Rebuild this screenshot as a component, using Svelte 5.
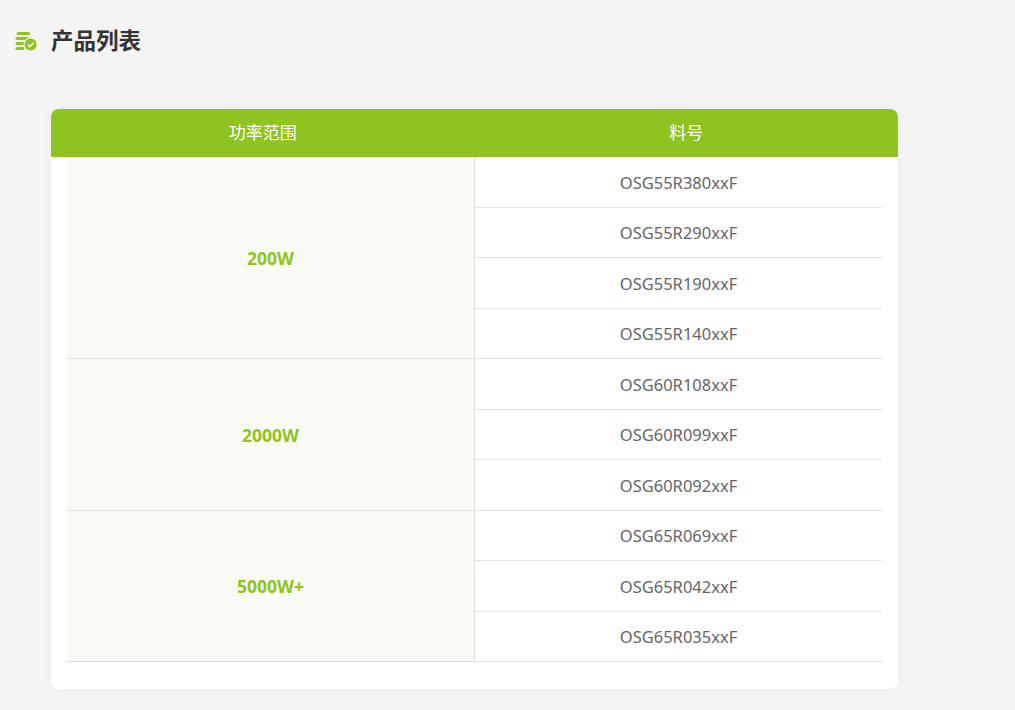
<script>
	const groups = [
		{ power: '200W', parts: ['OSG55R380xxF', 'OSG55R290xxF', 'OSG55R190xxF', 'OSG55R140xxF'] },
		{ power: '2000W', parts: ['OSG60R108xxF', 'OSG60R099xxF', 'OSG60R092xxF'] },
		{ power: '5000W+', parts: ['OSG65R069xxF', 'OSG65R042xxF', 'OSG65R035xxF'] }
	];
</script>

<div class="page">
	<div class="title">
		<svg class="icon" width="22" height="20" viewBox="0 0 22 20">
			<rect x="1.5" y="1" width="13.5" height="3" rx="1.5" fill="#8fc31f" />
			<rect x="0.5" y="6" width="14" height="3" rx="1.5" fill="#8fc31f" />
			<rect x="0.5" y="11" width="9" height="3" rx="1.5" fill="#8fc31f" />
			<rect x="0.5" y="16" width="9" height="3" rx="1.5" fill="#8fc31f" />
			<circle cx="15.6" cy="13.4" r="7" fill="#f4f4f4" />
			<circle cx="15.6" cy="13.4" r="6" fill="#8fc31f" />
			<path d="M12.8 13.4l2.1 2.2 3.7-3.9" fill="none" stroke="#f4f4f4" stroke-width="1.6" />
		</svg>
		<h1>产品列表</h1>
	</div>

	<div class="card">
		<div class="head">
			<div>功率范围</div>
			<div>料号</div>
		</div>
		<div class="body">
			<table>
				<tbody>
					{#each groups as group}
						{#each group.parts as part, i}
							<tr>
								{#if i === 0}
									<td class="power" rowspan={group.parts.length}>{group.power}</td>
								{/if}
								<td class="part">{part}</td>
							</tr>
						{/each}
					{/each}
				</tbody>
			</table>
		</div>
	</div>
</div>

<style>
	:global(body) {
		background: #f4f4f4;
	}

	.page {
		font-family: "Noto Sans", "Open Sans", "Noto Sans CJK SC", sans-serif;
		height: 710px;
		overflow: hidden;
		padding: 21px 0 0 15px;
		box-sizing: border-box;
	}

	.title {
		display: flex;
		align-items: center;
		height: 36px;
	}

	.icon {
		display: block;
		margin-right: 14px;
		margin-top: 4px;
	}

	h1 {
		margin: 0;
		font-family: "Noto Sans CJK SC", sans-serif;
		font-size: 22.5px;
		font-weight: 700;
		color: #333;
	}

	.card {
		width: 847px;
		margin: 52px 0 0 36px;
		background: #fff;
		border-radius: 8px;
		overflow: hidden;
		box-shadow: 0 0 12px rgba(0, 0, 0, 0.03);
	}

	.head {
		display: grid;
		grid-template-columns: 1fr 1fr;
		height: 48px;
		line-height: 46px;
		background: #8fc31f;
		color: #fff;
		font-size: 17px;
		font-family: "Noto Sans CJK SC", sans-serif;
		text-align: center;
	}

	.body {
		padding: 0 16px 27px;
	}

	table {
		width: 100%;
		border-collapse: separate;
		border-spacing: 0;
		table-layout: fixed;
	}

	td {
		height: 50.5px;
		padding: 1px 0 0;
		box-sizing: border-box;
		text-align: center;
		font-size: 16.5px;
		border-bottom: 1px solid #e0e0dc;
	}

	.power {
		width: 408px;
		background: #f9fcf4;
		border-right: 1px solid #e0e2da;
		color: #8fc31f;
		font-size: 17.5px;
		font-weight: 700;
	}

	.part {
		color: #666;
	}
</style>
